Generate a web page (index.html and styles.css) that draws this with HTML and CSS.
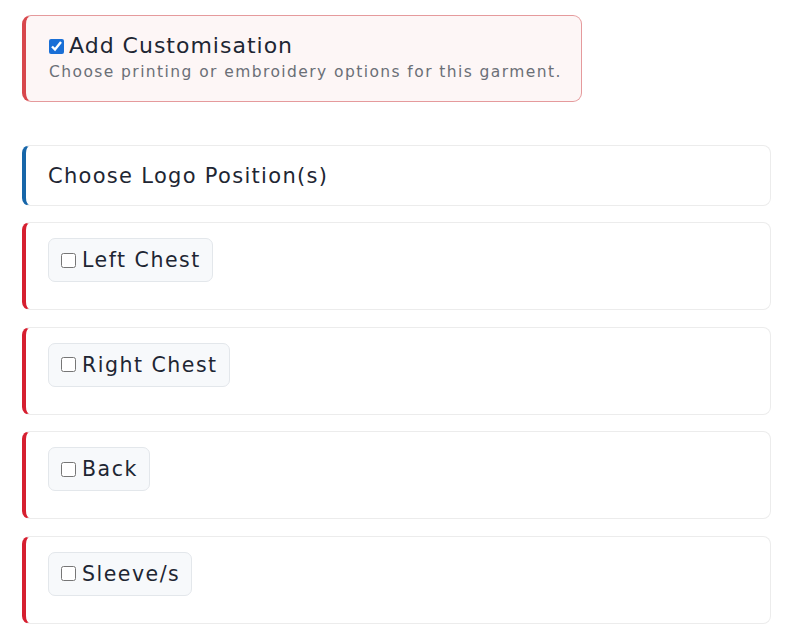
FILE: index.html
```html
<!DOCTYPE html>
<html lang="en">
<head>
  <meta charset="UTF-8" />
  <title>Customisation</title>
  <link rel="stylesheet" href="styles.css">
</head>
<body>

  <div class="custom-box">
    <label class="custom-title"><input type="checkbox" checked>Add Customisation</label>
    <div class="custom-sub">Choose printing or embroidery options for this garment.</div>
  </div>

  <div class="section-head">Choose Logo Position(s)</div>

  <div class="position">
    <label class="pill"><input type="checkbox">Left Chest</label>
  </div>
  <div class="position">
    <label class="pill"><input type="checkbox">Right Chest</label>
  </div>
  <div class="position">
    <label class="pill"><input type="checkbox">Back</label>
  </div>
  <div class="position">
    <label class="pill"><input type="checkbox">Sleeve/s</label>
  </div>

</body>
</html>
```

FILE: styles.css
```css
body {
  font-family: "DejaVu Sans", sans-serif;
  color: #1e2633;
  margin: 0;
  padding: 15px 29px 0 22px;
  background: #fff;
}
.custom-box {
  box-sizing: border-box;
  width: 560px;
  height: 87px;
  border: 1px solid #e59a9c;
  border-left: 4px solid #d8474c;
  border-radius: 9px;
  background: #fdf6f6;
  padding: 17px 10px 0 23px;
  margin-bottom: 43px;
}
.custom-title {
  display: flex;
  align-items: center;
  font-size: 22px;
  line-height: 26px;
  letter-spacing: 1px;
}
.custom-title input {
  width: 15px;
  height: 15px;
  margin: 0 5px 0 0;
  accent-color: #1a6fd6;
}
.custom-sub {
  font-size: 15.5px;
  letter-spacing: 1.42px;
  white-space: nowrap;
  color: #6b6f76;
  margin-top: 4px;
}
.section-head {
  box-sizing: border-box;
  height: 61px;
  border: 1px solid #ececec;
  border-left: 4px solid #1766a9;
  border-radius: 8px;
  padding: 0 22px;
  display: flex;
  align-items: center;
  font-size: 21px;
  letter-spacing: 1.3px;
  margin-bottom: 16px;
}
.position {
  box-sizing: border-box;
  height: 88px;
  border: 1px solid #ececec;
  border-left: 4px solid #d61f30;
  border-radius: 8px;
  padding: 15px 22px 0;
  margin-bottom: 16.5px;
}
.pill {
  display: inline-flex;
  align-items: center;
  box-sizing: border-box;
  height: 44px;
  padding: 0 11px 0 12px;
  background: #f7f9fb;
  border: 1px solid #e3e7eb;
  border-radius: 7px;
  font-size: 20.5px;
  letter-spacing: 1.5px;
}
.pill input {
  width: 15px;
  height: 15px;
  margin: 0 6px 0 0;
}
```
